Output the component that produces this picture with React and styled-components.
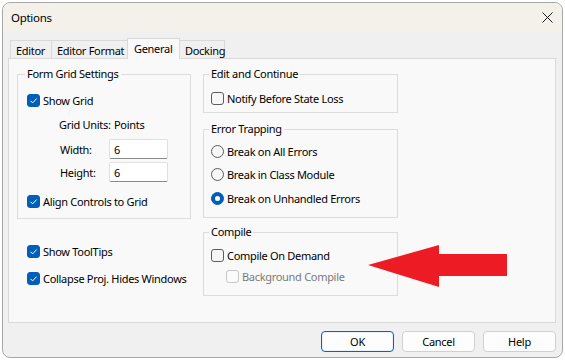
import React from 'react'
import styled, { createGlobalStyle } from 'styled-components'

const Global = createGlobalStyle`
  html, body {
    margin: 0;
    padding: 0;
    background: #ffffff;
  }
  body {
    font-family: "Noto Sans", "Open Sans", sans-serif;
    font-size: 11px;
    letter-spacing: -0.3px;
    color: #000;
  }
`

const Window = styled.div`
  position: relative;
  box-sizing: border-box;
  margin: 2px 0 0 2px;
  width: 561px;
  height: 356px;
  border: 1px solid #a8a8a8;
  border-radius: 8px;
  overflow: hidden;
  background: #f0f0f0;
  display: flex;
  flex-direction: column;
`

const TitleBar = styled.div`
  height: 28px;
  flex: none;
  background: #f4f1ea;
  display: flex;
  align-items: center;
  justify-content: space-between;
  padding: 0 7px 0 8px;
  font-size: 11.5px;
`

const CloseBtn = styled.div`
  width: 12px;
  height: 12px;
  display: flex;
  align-items: center;
  justify-content: center;
  margin-right: 2px;
`

const Body = styled.div`
  flex: 1;
  display: flex;
  flex-direction: column;
  padding: 7px 6px 0 5px;
`

const TabRow = styled.div`
  height: 21px;
  display: flex;
  align-items: flex-end;
  padding-left: 2px;
`

const Tab = styled.div`
  box-sizing: border-box;
  width: ${p => p.$w}px;
  height: ${p => (p.$active ? 21 : 19)}px;
  margin-left: -1px;
  border: 1px solid #d9d9d9;
  border-bottom: none;
  background: ${p => (p.$active ? '#f9f9f9' : '#f0f0f0')};
  display: flex;
  align-items: ${p => (p.$active ? 'flex-start' : 'center')};
  padding: ${p => (p.$active ? '2px 0 0 6px' : '0 0 0 5px')};
  white-space: nowrap;
  ${p => p.$active && 'position: relative; z-index: 2;'}
  &:first-child { margin-left: 0; }
`

const Panel = styled.div`
  position: relative;
  z-index: 1;
  box-sizing: border-box;
  margin-top: -1px;
  height: 265px;
  border: 1px solid #d9d9d9;
  background: #f9f9f9;
  display: flex;
  gap: 12px;
  padding: 7px 0 0 8px;
`

const Column = styled.div`
  display: flex;
  flex-direction: column;
  width: ${p => p.$w}px;
`

const Group = styled.fieldset`
  box-sizing: border-box;
  margin: ${p => p.$top || 0}px 0 0 0;
  border: 1px solid #dcdcdc;
  padding: 0 0 ${p => p.$bottom}px ${p => p.$left}px;
  display: flex;
  flex-direction: column;
  min-width: 0;
`

const Legend = styled.legend`
  padding: 0 2px;
  margin-left: -2px;
  line-height: 16px;
  height: 16px;
`

const Row = styled.div`
  display: flex;
  align-items: center;
  height: ${p => p.$h || 16}px;
  margin-top: ${p => p.$top || 0}px;
  padding-left: ${p => p.$indent || 0}px;
  color: ${p => (p.$disabled ? '#7a7a7a' : '#000')};
  white-space: nowrap;
`

const Box = styled.span`
  box-sizing: border-box;
  flex: none;
  width: 13px;
  height: 13px;
  border-radius: 3px;
  margin-right: 3px;
  display: flex;
  align-items: center;
  justify-content: center;
  background: ${p => (p.$checked ? '#005fb8' : p.$disabled ? '#fbfbfb' : '#f7f7f7')};
  border: 1px solid ${p => (p.$checked ? '#005fb8' : p.$disabled ? '#c6c6c6' : '#5c5c5c')};
`

const Radio = styled.span`
  box-sizing: border-box;
  flex: none;
  width: 13px;
  height: 13px;
  border-radius: 50%;
  margin-right: 3px;
  display: flex;
  align-items: center;
  justify-content: center;
  background: ${p => (p.$checked ? '#005fb8' : '#f7f7f7')};
  border: 1px solid ${p => (p.$checked ? '#005fb8' : '#5c5c5c')};
  &::after {
    content: '';
    display: ${p => (p.$checked ? 'block' : 'none')};
    width: 5px;
    height: 5px;
    border-radius: 50%;
    background: #fff;
  }
`

const Label = styled.span`
  display: inline-block;
  width: ${p => (p.$w ? `${p.$w}px` : 'auto')};
`

const Input = styled.div`
  box-sizing: border-box;
  width: 59px;
  height: 20px;
  background: #fff;
  border: 1px solid #e0e0e0;
  border-bottom-color: #8a8a8a;
  border-radius: 2px;
  display: flex;
  align-items: center;
  padding-left: 4px;
`

const Footer = styled.div`
  display: flex;
  justify-content: flex-end;
  gap: 8px;
  margin-top: 8px;
`

const Button = styled.div`
  box-sizing: border-box;
  width: 73px;
  height: 21px;
  border-radius: 4px;
  background: #fdfdfd;
  border: 1px solid ${p => (p.$primary ? '#0067c0' : '#d0d0d0')};
  box-shadow: ${p => (p.$primary ? 'inset 0 0 0 1px #e8f1fb' : 'none')};
  display: flex;
  align-items: center;
  justify-content: center;
`

const Arrow = styled.svg`
  position: absolute;
  z-index: 5;
  left: 364px;
  top: 240px;
`

function Check({ checked, disabled, children, indent, top }) {
  return (
    <Row $indent={indent} $top={top} $disabled={disabled}>
      <Box $checked={checked} $disabled={disabled}>
        {checked && (
          <svg width="11" height="11" viewBox="0 0 11 11">
            <polyline points="2.5,5.8 4.6,7.9 8.6,3.6" fill="none" stroke="#fff" strokeWidth="1" />
          </svg>
        )}
      </Box>
      {children}
    </Row>
  )
}

function Option({ checked, children, top }) {
  return (
    <Row $top={top}>
      <Radio $checked={checked} />
      {children}
    </Row>
  )
}

export default function App() {
  return (
    <>
      <Global />
      <Window>
        <TitleBar>
          <span>Options</span>
          <CloseBtn>
            <svg width="11" height="11" viewBox="0 0 11 11">
              <path d="M0.5 0.5 L10.5 10.5 M10.5 0.5 L0.5 10.5" stroke="#1a1a1a" strokeWidth="1" fill="none" />
            </svg>
          </CloseBtn>
        </TitleBar>
        <Body>
          <TabRow>
            <Tab $w={42}>Editor</Tab>
            <Tab $w={77}>Editor Format</Tab>
            <Tab $w={53} $active>General</Tab>
            <Tab $w={46}>Docking</Tab>
          </TabRow>
          <Panel>
            <Column $w={174}>
              <Group $left={9} $bottom={9}>
                <Legend>Form Grid Settings</Legend>
                <Check checked top={10}>Show Grid</Check>
                <Row $top={8} $indent={32}>
                  <Label $w={55}>Grid Units:</Label>
                  <span>Points</span>
                </Row>
                <Row $h={20} $top={7} $indent={33}>
                  <Label $w={49}>Width:</Label>
                  <Input>6</Input>
                </Row>
                <Row $h={20} $top={3} $indent={33}>
                  <Label $w={49}>Height:</Label>
                  <Input>6</Input>
                </Row>
                <Check checked top={11}>Align Controls to Grid</Check>
              </Group>
              <Row $top={24} $indent={10}>
                <Check checked>Show ToolTips</Check>
              </Row>
              <Row $top={11} $indent={10}>
                <Check checked>Collapse Proj. Hides Windows</Check>
              </Row>
            </Column>
            <Column $w={195}>
              <Group $left={7} $bottom={6}>
                <Legend>Edit and Continue</Legend>
                <Check top={8}>Notify Before State Loss</Check>
              </Group>
              <Group $left={7} $bottom={11} $top={8}>
                <Legend>Error Trapping</Legend>
                <Option top={6}>Break on All Errors</Option>
                <Option top={7}>Break in Class Module</Option>
                <Option checked top={8}>Break on Unhandled Errors</Option>
              </Group>
              <Group $left={7} $bottom={11} $top={6}>
                <Legend>Compile</Legend>
                <Check top={7}>Compile On Demand</Check>
                <Check disabled indent={15} top={5}>Background Compile</Check>
              </Group>
            </Column>
          </Panel>
          <Footer>
            <Button $primary>OK</Button>
            <Button>Cancel</Button>
            <Button>Help</Button>
          </Footer>
        </Body>
        <Arrow width="145" height="50" viewBox="0 0 145 50">
          <polygon points="1,22 72,2 72,11 140,11 140,33 72,33 72,44" fill="#ed1c24" />
        </Arrow>
      </Window>
    </>
  )
}
